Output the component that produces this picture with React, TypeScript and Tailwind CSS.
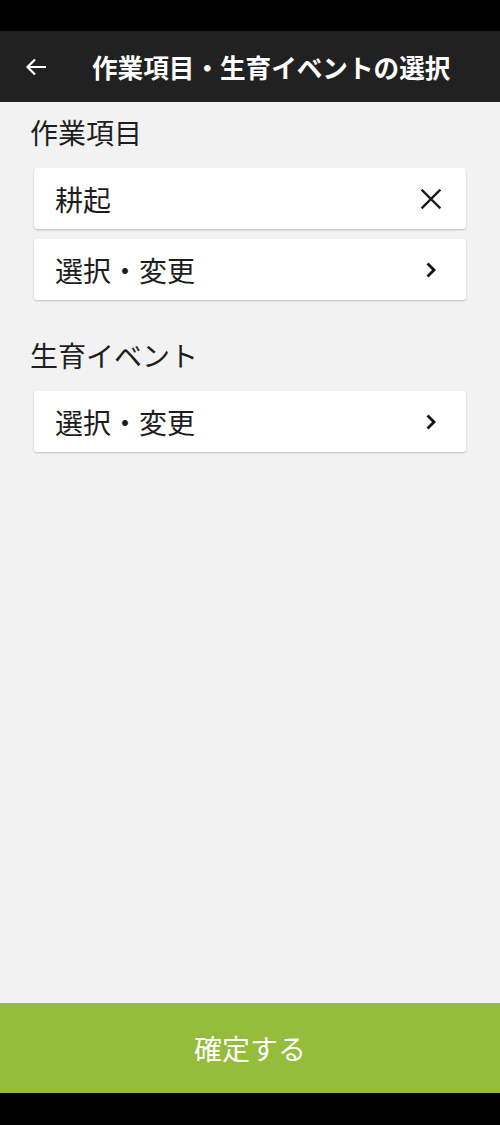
import React from "react";

const font = { fontFamily: '"Noto Sans CJK JP", "Noto Sans", sans-serif' };

function XIcon() {
  return (
    <svg width="20" height="20" viewBox="0 0 20 20" fill="none">
      <path d="M1.5 1.5 L18.5 18.5 M18.5 1.5 L1.5 18.5" stroke="#1a1a1a" strokeWidth="2.4" strokeLinecap="square" />
    </svg>
  );
}

function Chevron() {
  return (
    <svg width="12" height="16" viewBox="0 0 12 16" fill="none">
      <path d="M2.5 1.5 L9 8 L2.5 14.5" stroke="#111" strokeWidth="2.8" strokeLinecap="butt" strokeLinejoin="miter" />
    </svg>
  );
}

function Card({ label, icon }: { label: string; icon: React.ReactNode }) {
  return (
    <div className="mx-[34px] h-[61px] bg-white rounded-[3px] shadow-[0_1px_2px_rgba(0,0,0,0.22)] flex items-center justify-between pl-[21px] pr-[25px]">
      <span className="text-[28px] leading-none text-[#1e1e1e]">{label}</span>
      <span className="flex items-center justify-center w-[20px]">{icon}</span>
    </div>
  );
}

export default function App() {
  return (
    <div className="w-[500px] h-[1125px] flex flex-col bg-[#f2f2f2]" style={font}>
      <div className="h-[31px] bg-black shrink-0" />
      <div className="h-[71px] bg-[#212121] shrink-0 flex items-center pl-[25px]">
        <svg width="22" height="18" viewBox="0 0 22 18" fill="none">
          <path d="M21 9 H3 M10 1.5 L2.5 9 L10 16.5" stroke="#fff" strokeWidth="2.2" strokeLinecap="butt" strokeLinejoin="miter" />
        </svg>
        <span className="ml-[45px] text-white font-bold text-[25.6px] leading-none">
          作業項目・生育イベントの選択
        </span>
      </div>
      <div className="flex-1 flex flex-col">
        <div className="h-[66px] flex items-center pl-[30px] pb-[6px]">
          <span className="text-[28px] leading-none text-[#1e1e1e]">作業項目</span>
        </div>
        <div className="flex flex-col gap-[10px]">
          <Card label="耕起" icon={<XIcon />} />
          <Card label="選択・変更" icon={<Chevron />} />
        </div>
        <div className="h-[91px] flex items-center pl-[30px] pt-[18px]">
          <span className="text-[28px] leading-none text-[#1e1e1e]">生育イベント</span>
        </div>
        <div className="flex flex-col">
          <Card label="選択・変更" icon={<Chevron />} />
        </div>
      </div>
      <div className="h-[90px] shrink-0 bg-[#95bc3b] flex items-center justify-center">
        <span className="text-white text-[28px] leading-none">確定する</span>
      </div>
      <div className="h-[32px] bg-black shrink-0" />
    </div>
  );
}
